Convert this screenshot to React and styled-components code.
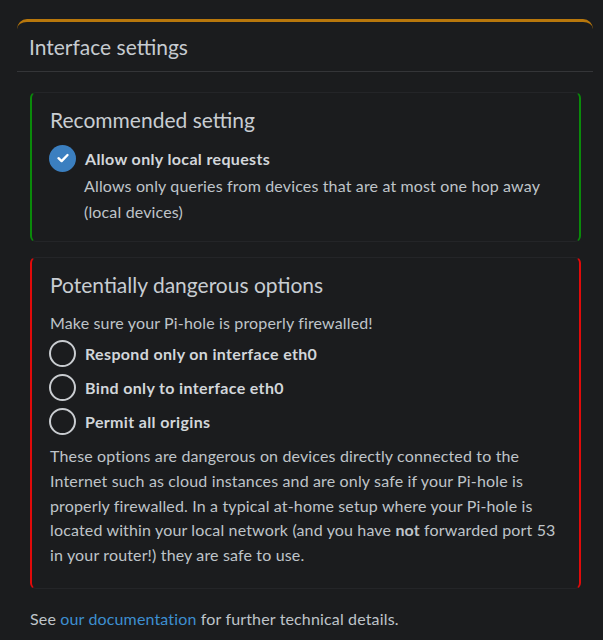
import React from "react";
import styled, { createGlobalStyle } from "styled-components";

const GlobalStyle = createGlobalStyle`
  body {
    margin: 0;
    background: #1b1c1e;
    font-family: "Lato", "Liberation Sans", sans-serif;
    color: #bfc4c9;
    font-size: 16px;
    letter-spacing: 0.15px;
  }
`;

const Page = styled.div`
  padding: 19px 10px 0 17px;
`;

const Card = styled.div`
  width: 576px;
  border-top: 3px solid #b8770c;
  border-radius: 10px 10px 0 0;
  background: #1b1c1e;
`;

const CardHeader = styled.div`
  height: 49px;
  padding: 0 12px;
  display: flex;
  align-items: center;
  font-size: 21px;
  letter-spacing: 0;
  color: #c6cbd0;
  border-bottom: 1px solid #343538;
`;

const CardBody = styled.div`
  padding: 20px 12px 0 13px;
`;

const Box = styled.div`
  border: 1px solid #242528;
  border-left: 2px solid ${(p) => p.$accent};
  border-right: 2px solid ${(p) => p.$accent};
  border-radius: 6px;
  padding: 14px 19px ${(p) => p.$bottom || 16}px 17px;
  margin-bottom: 15px;
`;

const BoxTitle = styled.div`
  font-size: 21px;
  letter-spacing: 0;
  line-height: 26px;
  padding-left: 1px;
  color: #c8cdd2;
  margin-bottom: ${(p) => p.$gap}px;
`;

const OptionRow = styled.div`
  display: flex;
  align-items: center;
  gap: 9px;
  height: ${(p) => p.$h || 34}px;
  font-weight: 700;
  letter-spacing: 0.35px;
  color: #d2d6da;
`;

const Radio = styled.span`
  width: 23px;
  height: 23px;
  border: 2px solid #c9ccd0;
  border-radius: 50%;
  flex: none;
`;

const Check = styled.span`
  width: 27px;
  height: 27px;
  border-radius: 50%;
  background: #3b7fc0;
  display: flex;
  align-items: center;
  justify-content: center;
  flex: none;
`;

const Desc = styled.div`
  padding-left: 35px;
  line-height: 26px;
  margin-top: 1px;
`;

const Text = styled.p`
  margin: 6px 0 0 1px;
  white-space: nowrap;
  line-height: 24.75px;
`;

const Warning = styled.p`
  margin: 0 0 1px 1px;
  line-height: 24px;
`;

const Footer = styled.p`
  margin: 18px 0 0;
  line-height: 24px;
`;

const Link = styled.a`
  color: #3d8fd1;
  text-decoration: none;
`;

function CheckIcon() {
  return (
    <svg width="14" height="14" viewBox="0 0 14 14">
      <path d="M2.5 7.2 L5.6 10.1 L11.5 4" fill="none" stroke="#fff" strokeWidth="2.4" strokeLinecap="round" strokeLinejoin="round" />
    </svg>
  );
}

export default function App() {
  const options = ["Respond only on interface eth0", "Bind only to interface eth0", "Permit all origins"];
  return (
    <Page>
      <GlobalStyle />
      <Card>
        <CardHeader>Interface settings</CardHeader>
        <CardBody>
          <Box $accent="#0a8a0a" $bottom={16}>
            <BoxTitle $gap={11}>Recommended setting</BoxTitle>
            <OptionRow $h={28}>
              <Check><CheckIcon /></Check>
              Allow only local requests
            </OptionRow>
            <Desc>
              Allows only queries from devices that are at most one hop away
              <br />
              (local devices)
            </Desc>
          </Box>
          <Box $accent="#e10a0a" $bottom={20}>
            <BoxTitle $gap={13}>Potentially dangerous options</BoxTitle>
            <Warning>Make sure your Pi-hole is properly firewalled!</Warning>
            {options.map((o) => (
              <OptionRow key={o}>
                <Radio />
                {o}
              </OptionRow>
            ))}
            <Text>
              These options are dangerous on devices directly connected to the
              <br />
              Internet such as cloud instances and are only safe if your Pi-hole is
              <br />
              properly firewalled. In a typical at-home setup where your Pi-hole is
              <br />
              located within your local network (and you have <b>not</b> forwarded port 53
              <br />
              in your router!) they are safe to use.
            </Text>
          </Box>
          <Footer>
            See <Link href="#">our documentation</Link> for further technical details.
          </Footer>
        </CardBody>
      </Card>
    </Page>
  );
}
